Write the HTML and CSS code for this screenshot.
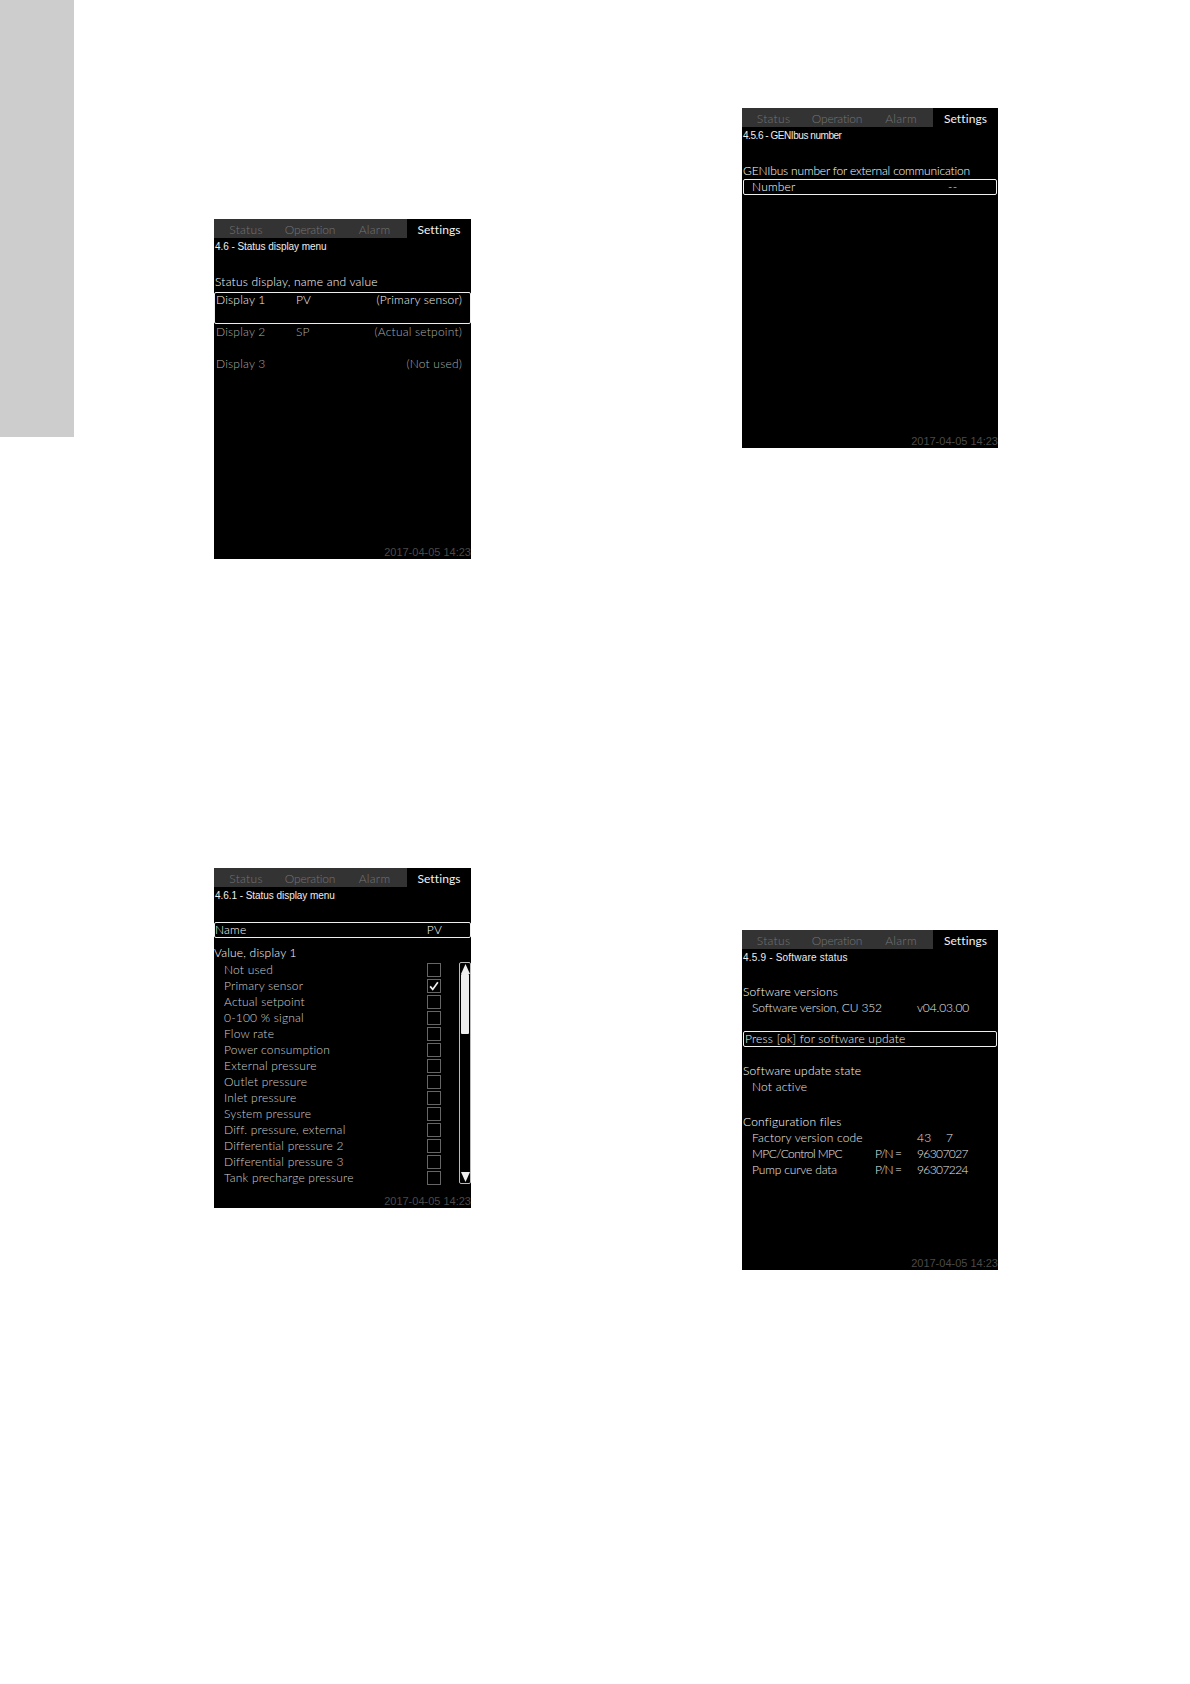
FILE: index.html
```html
<!DOCTYPE html>
<html lang="en">
<head>
<meta charset="utf-8">
<title>Control panel settings</title>
<link rel="stylesheet" href="styles.css">
</head>
<body>
<div class="page">
  <div class="sidebar"></div>

  <div class="col col-left">
    <section class="screen">
      <div class="tabs"><span>Status</span><span class="op">Operation</span><span>Alarm</span><span class="active">Settings</span></div>
      <div class="title">4.6 - Status display menu</div>
      <div class="head gap-20">Status display, name and value</div>
      <div class="box box-tall display"><span>Display 1</span><span>PV</span><span class="end">(Primary sensor)</span></div>
      <div class="display dim"><span>Display 2</span><span>SP</span><span class="end">(Actual setpoint)</span></div>
      <div class="display dim"><span>Display 3</span><span></span><span class="end">(Not used)</span></div>
      <div class="stamp">2017-04-05 14:23</div>
    </section>

    <section class="screen screen-lower">
      <div class="tabs"><span>Status</span><span class="op">Operation</span><span>Alarm</span><span class="active">Settings</span></div>
      <div class="title">4.6.1 - Status display menu</div>
      <div class="box box-name"><span>Name</span><span class="pv">PV</span></div>
      <div class="head head-value">Value, display 1</div>
      <div class="listwrap">
        <ul class="list">
          <li>Not used<i class="cb"></i></li>
          <li>Primary sensor<i class="cb"><svg viewBox="0 0 14 14" width="12" height="12"><path d="M2.5 7.5 L5.5 11 L11.5 2.5" fill="none" stroke="#eee" stroke-width="2"/></svg></i></li>
          <li>Actual setpoint<i class="cb"></i></li>
          <li>0-100 % signal<i class="cb"></i></li>
          <li>Flow rate<i class="cb"></i></li>
          <li>Power consumption<i class="cb"></i></li>
          <li>External pressure<i class="cb"></i></li>
          <li>Outlet pressure<i class="cb"></i></li>
          <li>Inlet pressure<i class="cb"></i></li>
          <li>System pressure<i class="cb"></i></li>
          <li>Diff. pressure, external<i class="cb"></i></li>
          <li>Differential pressure 2<i class="cb"></i></li>
          <li>Differential pressure 3<i class="cb"></i></li>
          <li>Tank precharge pressure<i class="cb"></i></li>
        </ul>
        <div class="scroll">
          <svg class="arrow" viewBox="0 0 9 10" width="9" height="10"><path d="M4.5 0 L9 10 H0 Z" fill="#eee"/></svg>
          <div class="thumb"></div>
          <svg class="arrow arrow-down" viewBox="0 0 9 10" width="9" height="10"><path d="M0 0 H9 L4.5 10 Z" fill="#eee"/></svg>
        </div>
      </div>
      <div class="stamp">2017-04-05 14:23</div>
    </section>
  </div>

  <div class="col col-right">
    <section class="screen">
      <div class="tabs"><span>Status</span><span class="op">Operation</span><span>Alarm</span><span class="active">Settings</span></div>
      <div class="title title-gen">4.5.6 - GENIbus number</div>
      <div class="head gap-20 head-tight">GENIbus number for external communication</div>
      <div class="box box-num"><span>Number</span><span>--</span></div>
      <div class="stamp">2017-04-05 14:23</div>
    </section>

    <section class="screen screen-lower-right">
      <div class="tabs"><span>Status</span><span class="op">Operation</span><span>Alarm</span><span class="active">Settings</span></div>
      <div class="title title-sw">4.5.9 - Software status</div>
      <div class="head gap-19">Software versions</div>
      <div class="info"><span class="tight">Software version, CU 352</span><span class="val-a tight">v04.03.00</span></div>
      <div class="box box-ok">Press [ok] for software update</div>
      <div class="head gap-16">Software update state</div>
      <div class="info">Not active</div>
      <div class="head gap-19">Configuration files</div>
      <div class="info"><span>Factory version code</span><span class="val-a">43</span><span class="val-b">7</span></div>
      <div class="info"><span class="caps">MPC/Control MPC</span><span class="pn">P/N =</span><span class="val-a num">96307027</span></div>
      <div class="info"><span class="tight">Pump curve data</span><span class="pn">P/N =</span><span class="val-a num">96307224</span></div>
      <div class="stamp">2017-04-05 14:23</div>
    </section>
  </div>
</div>
</body>
</html>
```
FILE: styles.css
```css
* { box-sizing: border-box; }
html, body { margin: 0; padding: 0; background: #fff; }
body { font-family: "Lato", "Liberation Sans", sans-serif; font-size: 12px; font-weight: 300; }

.page { display: flex; align-items: flex-start; width: 1190px; height: 1684px; overflow: hidden; }
.sidebar { width: 74px; height: 437px; background: #cdcdcd; flex: none; }
.col { flex: none; }
.col-left { width: 257px; margin-left: 140px; padding-top: 219px; }
.col-right { width: 256px; margin-left: 271px; padding-top: 108px; }

.screen { display: flex; flex-direction: column; height: 340px; background: #000; color: #fff; line-height: 16px; }
.screen-lower { margin-top: 309px; }
.screen-lower-right { margin-top: 482px; }

.tabs { display: grid; grid-template-columns: 64px 64px 65px 1fr; height: 19px; line-height: 21px; background: #333; color: #747474; text-align: center; font-size: 12px; letter-spacing: 0.3px; flex: none; }
.col-right .tabs { grid-template-columns: 63px 64px 64px 1fr; }
.tabs .op { letter-spacing: -0.2px; }
.tabs .active { background: #000; color: #f2f2f2; font-weight: 400; letter-spacing: 0.1px; }

.title { height: 16px; line-height: 18px; padding-left: 1px; font-family: "Liberation Sans", sans-serif; font-weight: 400; font-size: 10px; letter-spacing: -0.05px; color: #eee; white-space: nowrap; }
.title-gen { letter-spacing: -0.45px; }
.title-sw { letter-spacing: 0.2px; }

.head { padding-left: 1px; height: 16px; letter-spacing: 0.2px; white-space: nowrap; }
.head-tight { letter-spacing: -0.17px; }
.gap-16 { margin-top: 16px; }
.gap-19 { margin-top: 19px; }
.gap-20 { margin-top: 20px; }

.box { border: 1px solid #eee; border-radius: 2px; letter-spacing: 0.2px; }
.box-name { display: flex; justify-content: space-between; height: 16px; line-height: 14px; padding-right: 28px; margin-top: 19px; }
.box-num { display: grid; grid-template-columns: 196px auto; height: 16px; line-height: 14px; padding-left: 8px; margin: 0 1px; }
.box-ok { height: 16px; line-height: 14px; margin: 15px 1px 0; padding-left: 1px; color: #f4f4f4; }

.display { display: grid; grid-template-columns: 80px 1fr auto; height: 31.5px; padding: 0 9px 0 2px; letter-spacing: 0.2px; color: #f0f0f0; white-space: nowrap; }
.box.display { height: 32px; margin-top: 2px; padding: 0 8px 0 1px; line-height: 14px; }
.display.dim { color: #ababab; }

.head-value { margin-top: 7px; padding-left: 0; }
.listwrap { display: flex; margin-top: 1px; }
.list { list-style: none; margin: 0; padding: 0 0 0 10px; width: 245px; }
.list li { display: flex; justify-content: space-between; align-items: center; height: 16px; color: #cfcfcf; letter-spacing: 0.2px; padding-right: 16px; white-space: nowrap; }
.cb { display: flex; align-items: center; justify-content: center; width: 14px; height: 14px; border: 1px solid #666; }

.scroll { width: 12px; height: 222px; margin-left: 2px; border: 1px solid #bbb; border-radius: 2px; padding: 1px; display: flex; flex-direction: column; align-items: center; }
.arrow { flex: none; }
.thumb { width: 8px; height: 60px; background: #eee; border-radius: 1px; }
.arrow-down { margin-top: auto; }

.info { display: flex; padding-left: 10px; height: 16px; color: #eaeaea; letter-spacing: 0.2px; position: relative; white-space: nowrap; }
.tight { letter-spacing: -0.15px; }
.caps { letter-spacing: -0.6px; }
.num { letter-spacing: -0.6px; }
.pn { position: absolute; left: 133px; letter-spacing: -1px; }
.val-a { position: absolute; left: 175px; }
.val-b { position: absolute; left: 204px; }

.stamp { margin-top: auto; height: 13px; line-height: 12px; text-align: right; font-family: "Liberation Sans", sans-serif; font-weight: 400; color: #4a4a4a; font-size: 11px; white-space: nowrap; }
```
